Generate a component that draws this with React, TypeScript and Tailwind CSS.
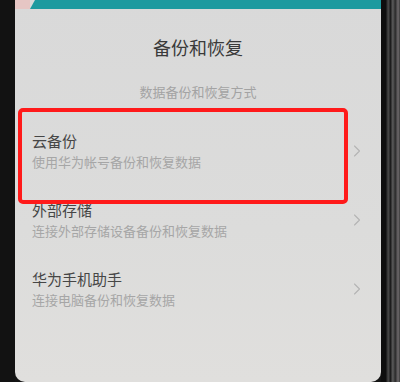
import { ChevronRight } from "lucide-react";

type TItem = {
  title: string;
  desc: string;
};

const items: Array<TItem> = [
  { title: "云备份", desc: "使用华为帐号备份和恢复数据" },
  { title: "外部存储", desc: "连接外部存储设备备份和恢复数据" },
  { title: "华为手机助手", desc: "连接电脑备份和恢复数据" },
];

const Row = ({ title, desc }: TItem) => (
  <div className="flex items-center justify-between h-[69px] pl-[17px] pr-[14px]">
    <div className="flex flex-col gap-[2px]">
      <div className="text-[15px] leading-[20px] text-[#464646]">{title}</div>
      <div className="text-[13px] leading-[18px] text-[#a6a6a6]">{desc}</div>
    </div>
    <ChevronRight className="w-[20px] h-[20px] text-[#b4b4b4]" strokeWidth={1.3} />
  </div>
);

export default function App() {
  return (
    <div
      className="flex w-[400px] h-[382px] bg-[#141414] overflow-hidden"
      style={{ fontFamily: '"Noto Sans CJK SC", "Noto Sans", sans-serif' }}
    >
      <div className="w-[15px] bg-[#121212]" />
      <div className="relative flex-1 flex flex-col bg-[linear-gradient(180deg,#d9d9d9_0%,#dcdcdb_60%,#e0dfdd_100%)] rounded-b-[10px]">
        <div className="flex h-[9px]">
          <div className="w-[15px] bg-[#e6c6c4]" />
          <div className="flex-1 bg-[#1d9a9f] [clip-path:polygon(5px_0,100%_0,100%_100%,0_100%)]" />
        </div>
        <div className="mt-[26px] text-center text-[18px] leading-[24px] text-[#3a3a3a]">
          备份和恢复
        </div>
        <div className="mt-[24px] text-center text-[13px] leading-[18px] text-[#a3a3a3]">
          数据备份和恢复方式
        </div>
        <div className="mt-[15px] flex flex-col">
          {items.map((it) => (
            <Row key={it.title} {...it} />
          ))}
        </div>
        <div className="absolute left-[3px] top-[108px] w-[330px] h-[96px] border-[4px] border-[#ff1a1a] rounded-[5px]" />
      </div>
      <div className="w-[19px] bg-[linear-gradient(90deg,#0e0e0e_0%,#0e0e0e_25%,#4a4a4a_38%,#1c1c1c_50%,#5c5c5c_62%,#2a2a2a_75%,#6e6a6c_90%,#3a3a3a_100%)]" />
    </div>
  );
}
